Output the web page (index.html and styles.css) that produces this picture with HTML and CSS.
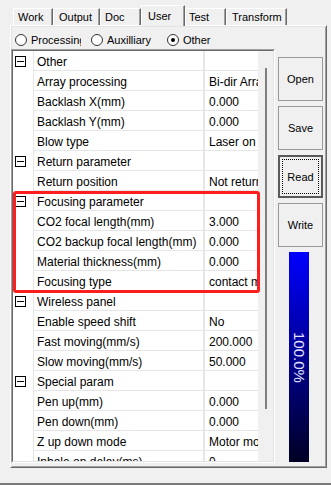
FILE: index.html
```html
<html>
<head>
	<link rel="stylesheet" href="styles.css">
</head>

<body>
	<div class="screen">
		<div class="tabs">
			<div class="tab tab-work">Work</div>
			<div class="tab tab-output">Output</div>
			<div class="tab tab-doc">Doc</div>
			<div class="tab tab-user tab-on">User</div>
			<div class="tab tab-test">Test</div>
			<div class="tab tab-transform">Transform</div>
		</div>

		<div class="panel">
			<div class="radios">
				<div class="radio">
					<span class="radio-dot"></span>
					<span class="radio-text radio-text-cut">Processing</span>
				</div>
				<div class="radio">
					<span class="radio-dot"></span>
					<span class="radio-text">Auxilliary</span>
				</div>
				<div class="radio radio-on">
					<span class="radio-dot"></span>
					<span class="radio-text">Other</span>
				</div>
			</div>

			<div class="main">
				<div class="grid">
					<div class="grid-in">
						<div class="rows">
							<div class="row">
								<div class="gutter"><svg width="11" height="11"><rect x="0.5" y="0.5" width="10" height="10" fill="#fff" stroke="#000"/><path d="M2 5.5h7" stroke="#000"/></svg></div>
								<div class="label">Other</div>
								<div class="value"></div>
							</div>
							<div class="row">
								<div class="gutter"></div>
								<div class="label">Array processing</div>
								<div class="value">Bi-dir Array processing</div>
							</div>
							<div class="row">
								<div class="gutter"></div>
								<div class="label">Backlash X(mm)</div>
								<div class="value">0.000</div>
							</div>
							<div class="row">
								<div class="gutter"></div>
								<div class="label">Backlash Y(mm)</div>
								<div class="value">0.000</div>
							</div>
							<div class="row">
								<div class="gutter"></div>
								<div class="label">Blow type</div>
								<div class="value">Laser on blow</div>
							</div>
							<div class="row">
								<div class="gutter"><svg width="11" height="11"><rect x="0.5" y="0.5" width="10" height="10" fill="#fff" stroke="#000"/><path d="M2 5.5h7" stroke="#000"/></svg></div>
								<div class="label">Return parameter</div>
								<div class="value"></div>
							</div>
							<div class="row">
								<div class="gutter"></div>
								<div class="label">Return position</div>
								<div class="value">Not return</div>
							</div>
							<div class="row">
								<div class="gutter"><svg width="11" height="11"><rect x="0.5" y="0.5" width="10" height="10" fill="#fff" stroke="#000"/><path d="M2 5.5h7" stroke="#000"/></svg></div>
								<div class="label">Focusing parameter</div>
								<div class="value"></div>
							</div>
							<div class="row">
								<div class="gutter"></div>
								<div class="label">CO2 focal length(mm)</div>
								<div class="value">3.000</div>
							</div>
							<div class="row">
								<div class="gutter"></div>
								<div class="label">CO2 backup focal length(mm)</div>
								<div class="value">0.000</div>
							</div>
							<div class="row">
								<div class="gutter"></div>
								<div class="label">Material thickness(mm)</div>
								<div class="value">0.000</div>
							</div>
							<div class="row">
								<div class="gutter"></div>
								<div class="label">Focusing type</div>
								<div class="value">contact measure</div>
							</div>
							<div class="row">
								<div class="gutter"><svg width="11" height="11"><rect x="0.5" y="0.5" width="10" height="10" fill="#fff" stroke="#000"/><path d="M2 5.5h7" stroke="#000"/></svg></div>
								<div class="label">Wireless panel</div>
								<div class="value"></div>
							</div>
							<div class="row">
								<div class="gutter"></div>
								<div class="label">Enable speed shift</div>
								<div class="value">No</div>
							</div>
							<div class="row">
								<div class="gutter"></div>
								<div class="label">Fast moving(mm/s)</div>
								<div class="value">200.000</div>
							</div>
							<div class="row">
								<div class="gutter"></div>
								<div class="label">Slow moving(mm/s)</div>
								<div class="value">50.000</div>
							</div>
							<div class="row">
								<div class="gutter"><svg width="11" height="11"><rect x="0.5" y="0.5" width="10" height="10" fill="#fff" stroke="#000"/><path d="M2 5.5h7" stroke="#000"/></svg></div>
								<div class="label">Special param</div>
								<div class="value"></div>
							</div>
							<div class="row">
								<div class="gutter"></div>
								<div class="label">Pen up(mm)</div>
								<div class="value">0.000</div>
							</div>
							<div class="row">
								<div class="gutter"></div>
								<div class="label">Pen down(mm)</div>
								<div class="value">0.000</div>
							</div>
							<div class="row">
								<div class="gutter"></div>
								<div class="label">Z up down mode</div>
								<div class="value">Motor mode</div>
							</div>
							<div class="row">
								<div class="gutter"></div>
								<div class="label">Inhale on delay(ms)</div>
								<div class="value">0</div>
							</div>
						</div>
						<div class="track">
							<div class="thumb"></div>
						</div>
					</div>
				</div>

				<div class="side">
					<div class="btn">Open</div>
					<div class="btn">Save</div>
					<div class="btn btn-focus">Read</div>
					<div class="btn">Write</div>
					<div class="progress">
						<span class="progress-text">100.0%</span>
					</div>
				</div>
			</div>
		</div>

		<div class="footer"></div>

		<div class="highlight"></div>
	</div>
</body>

</html>
```

FILE: styles.css
```css
body{
	margin: 0;
	background-color: #f0f0f0;
	font-family: "Liberation Sans", Arial, sans-serif;
	font-size: 11px;
	color: #000;
	overflow: hidden;
}

.screen{
	position: relative;
	width: 331px;
	height: 485px;
}

/* tab strip */
.tabs{
	display: flex;
	align-items: flex-end;
	height: 20px;
	padding-top: 5px;
	padding-left: 13px;
}

.tab{
	height: 17px;
	box-sizing: border-box;
	border-top: 1px solid #fff;
	border-left: 1px solid #fff;
	border-right: 1px solid #696969;
	box-shadow: inset -1px 0 #a0a0a0;
	padding-left: 4px;
	line-height: 16px;
	white-space: nowrap;
}

.tab-work{ width: 40px; }
.tab-output{ width: 47px; padding-left: 5px; }
.tab-doc{ width: 41px; }
.tab-user{ width: 44px; padding-left: 6px; }
.tab-test{ width: 41px; padding-left: 3px; }
.tab-transform{ width: 61px; padding-left: 5px; }

.tab-on{
	height: 21px;
	margin-bottom: -1px;
	padding-top: 2px;
	position: relative;
	z-index: 1;
	background-color: #f0f0f0;
}

/* tab page */
.panel{
	margin-left: 10px;
	width: 317px;
	height: 443px;
	box-sizing: border-box;
	border: 1px solid;
	border-color: #fff #696969 #696969 #fff;
	box-shadow: inset 1px 1px #e3e3e3, inset -1px -1px #a0a0a0;
}

.radios{
	display: flex;
	height: 23px;
	box-sizing: border-box;
	padding: 8px 0 0 4px;
}

.radio{
	display: flex;
	width: 76px;
	line-height: 12px;
}

.radio:last-child{
	width: auto;
}

.radio-dot{
	flex: none;
	width: 12px;
	height: 12px;
	box-sizing: border-box;
	border: 1px solid #333;
	border-radius: 50%;
	background-color: #fff;
	margin-right: 4px;
	display: flex;
	align-items: center;
	justify-content: center;
}

.radio-on .radio-dot::after{
	content: "";
	width: 4px;
	height: 4px;
	border-radius: 50%;
	background-color: #000;
}

.radio-text{
	white-space: nowrap;
	overflow: hidden;
}

.radio-text-cut{
	width: 50px;
}

.main{
	display: flex;
	height: 414px;
}

/* property grid */
.grid{
	width: 264px;
	box-sizing: border-box;
	border: 1px solid;
	border-color: #a0a0a0 #fff #fff #a0a0a0;
}

.grid-in{
	height: 100%;
	box-sizing: border-box;
	display: flex;
	border: 1px solid;
	border-color: #696969 #e3e3e3 #e3e3e3 #696969;
	background-color: #fff;
}

.rows{
	flex: 1;
	overflow: hidden;
}

.row{
	display: flex;
	height: 20px;
	font-size: 12px;
}

.gutter{
	flex: none;
	width: 21px;
	box-sizing: border-box;
	border-right: 1px solid #e6e6e6;
	padding: 5px 0 0 2px;
}

.gutter svg{
	display: block;
}

.label{
	flex: none;
	width: 171px;
	box-sizing: border-box;
	border-right: 2px solid #e6e6e6;
	border-bottom: 1px solid #e6e6e6;
	padding: 4px 0 1px 3px;
	line-height: 14px;
	white-space: nowrap;
	overflow: hidden;
}

.value{
	flex: none;
	width: 53px;
	box-sizing: border-box;
	border-bottom: 1px solid #e6e6e6;
	padding: 4px 0 1px 4px;
	line-height: 14px;
	white-space: nowrap;
	overflow: hidden;
}

.track{
	flex: none;
	width: 15px;
	background-color: #f0f0f0;
}

.thumb{
	width: 2px;
	height: 341px;
	margin: 17px 0 0 7px;
	background-color: #7f7f7f;
}

/* buttons on the right */
.side{
	width: 45px;
	margin-left: 3px;
	padding-top: 8px;
	display: flex;
	flex-direction: column;
	gap: 5px;
}

.btn{
	flex: none;
	height: 44px;
	box-sizing: border-box;
	border: 1px solid #999;
	background-color: #f0f0f0;
	display: flex;
	align-items: center;
	justify-content: center;
}

.btn-focus{
	height: 43px;
	border: 2px solid #5a5a5a;
	position: relative;
}

.btn-focus::after{
	content: "";
	position: absolute;
	top: 2px;
	left: 2px;
	right: 2px;
	bottom: 2px;
	border: 1px dotted #000;
}

.progress{
	flex: none;
	width: 20px;
	height: 210px;
	margin-left: 11px;
	background: linear-gradient(#0000ff, #000024);
	display: flex;
	align-items: center;
	justify-content: center;
}

.progress-text{
	writing-mode: vertical-rl;
	color: #e6e6ff;
	font-size: 15px;
	line-height: 20px;
}

.footer{
	margin-top: 15px;
	height: 2px;
	background-color: #7a7a7a;
}

.highlight{
	position: absolute;
	left: 13px;
	top: 191px;
	width: 247px;
	height: 102px;
	box-sizing: border-box;
	border: 3px solid #ff1e1e;
	border-radius: 3px;
}
```
